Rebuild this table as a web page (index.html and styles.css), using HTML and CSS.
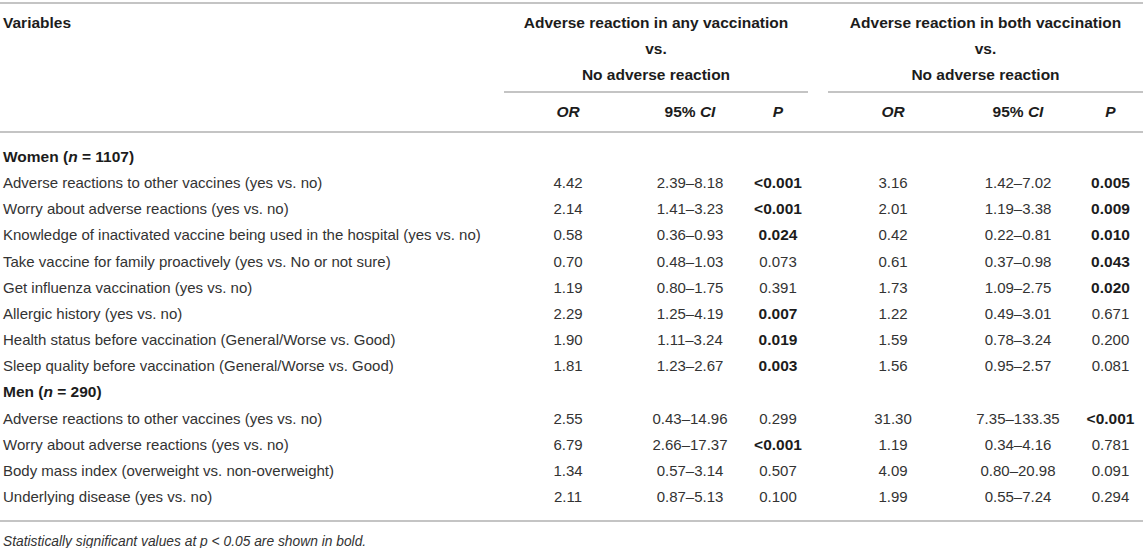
FILE: index.html
```html
<!DOCTYPE html>
<html lang="en">

<head>
    <meta charset="UTF-8">
    <meta name="viewport" content="width=device-width, initial-scale=1.0">
    <title>Adverse reactions - multivariable analysis</title>
    <link rel="stylesheet" href="styles.css">
</head>

<body>
    <table class="results">
        <colgroup>
            <col class="c-var">
            <col class="c-or1">
            <col class="c-ci1">
            <col class="c-p1">
            <col class="c-gap">
            <col class="c-or2">
            <col class="c-ci2">
            <col class="c-p2">
        </colgroup>
        <thead>
            <tr class="group-row">
                <th class="var-head" rowspan="2">Variables</th>
                <th class="group" colspan="3">Adverse reaction in any vaccination<br>vs.<br>No adverse reaction</th>
                <th class="gap"></th>
                <th class="group" colspan="3">Adverse reaction in both vaccination<br>vs.<br>No adverse reaction</th>
            </tr>
            <tr class="stat-row">
                <th><i>OR</i></th>
                <th>95% <i>CI</i></th>
                <th><i>P</i></th>
                <th class="gap"></th>
                <th><i>OR</i></th>
                <th>95% <i>CI</i></th>
                <th><i>P</i></th>
            </tr>
        </thead>
        <tbody>
            <tr class="section">
                <td colspan="8"><b>Women (<i>n</i> = 1107)</b></td>
            </tr>
            <tr>
                <td>Adverse reactions to other vaccines (yes vs. no)</td>
                <td>4.42</td><td>2.39–8.18</td><td><b>&lt;0.001</b></td><td></td>
                <td>3.16</td><td>1.42–7.02</td><td><b>0.005</b></td>
            </tr>
            <tr>
                <td>Worry about adverse reactions (yes vs. no)</td>
                <td>2.14</td><td>1.41–3.23</td><td><b>&lt;0.001</b></td><td></td>
                <td>2.01</td><td>1.19–3.38</td><td><b>0.009</b></td>
            </tr>
            <tr>
                <td>Knowledge of inactivated vaccine being used in the hospital (yes vs. no)</td>
                <td>0.58</td><td>0.36–0.93</td><td><b>0.024</b></td><td></td>
                <td>0.42</td><td>0.22–0.81</td><td><b>0.010</b></td>
            </tr>
            <tr>
                <td>Take vaccine for family proactively (yes vs. No or not sure)</td>
                <td>0.70</td><td>0.48–1.03</td><td>0.073</td><td></td>
                <td>0.61</td><td>0.37–0.98</td><td><b>0.043</b></td>
            </tr>
            <tr>
                <td>Get influenza vaccination (yes vs. no)</td>
                <td>1.19</td><td>0.80–1.75</td><td>0.391</td><td></td>
                <td>1.73</td><td>1.09–2.75</td><td><b>0.020</b></td>
            </tr>
            <tr>
                <td>Allergic history (yes vs. no)</td>
                <td>2.29</td><td>1.25–4.19</td><td><b>0.007</b></td><td></td>
                <td>1.22</td><td>0.49–3.01</td><td>0.671</td>
            </tr>
            <tr>
                <td>Health status before vaccination (General/Worse vs. Good)</td>
                <td>1.90</td><td>1.11–3.24</td><td><b>0.019</b></td><td></td>
                <td>1.59</td><td>0.78–3.24</td><td>0.200</td>
            </tr>
            <tr>
                <td>Sleep quality before vaccination (General/Worse vs. Good)</td>
                <td>1.81</td><td>1.23–2.67</td><td><b>0.003</b></td><td></td>
                <td>1.56</td><td>0.95–2.57</td><td>0.081</td>
            </tr>
            <tr class="section">
                <td colspan="8"><b>Men (<i>n</i> = 290)</b></td>
            </tr>
            <tr>
                <td>Adverse reactions to other vaccines (yes vs. no)</td>
                <td>2.55</td><td>0.43–14.96</td><td>0.299</td><td></td>
                <td>31.30</td><td>7.35–133.35</td><td><b>&lt;0.001</b></td>
            </tr>
            <tr>
                <td>Worry about adverse reactions (yes vs. no)</td>
                <td>6.79</td><td>2.66–17.37</td><td><b>&lt;0.001</b></td><td></td>
                <td>1.19</td><td>0.34–4.16</td><td>0.781</td>
            </tr>
            <tr>
                <td>Body mass index (overweight vs. non-overweight)</td>
                <td>1.34</td><td>0.57–3.14</td><td>0.507</td><td></td>
                <td>4.09</td><td>0.80–20.98</td><td>0.091</td>
            </tr>
            <tr>
                <td>Underlying disease (yes vs. no)</td>
                <td>2.11</td><td>0.87–5.13</td><td>0.100</td><td></td>
                <td>1.99</td><td>0.55–7.24</td><td>0.294</td>
            </tr>
        </tbody>
    </table>
    <p class="note">Statistically significant values at <span>p</span> &lt; 0.05 are shown in bold.</p>
</body>

</html>
```

FILE: styles.css
```css
body {
    margin: 0;
    padding-top: 2px;
    background-color: #ffffff;
    font-family: "Liberation Sans", Arial, Helvetica, sans-serif;
    color: #333333;
}

.results {
    width: 1143px;
    table-layout: fixed;
    border-collapse: separate;
    border-spacing: 0;
    border-top: 2px solid #c4c4c4;
    border-bottom: 2px solid #c4c4c4;
    font-size: 15px;
}

.c-var { width: 504px; }
.c-or1 { width: 128px; }
.c-ci1 { width: 116px; }
.c-p1 { width: 60px; }
.c-gap { width: 20px; }
.c-or2 { width: 130px; }
.c-ci2 { width: 120px; }
.c-p2 { width: 65px; }

th {
    font-weight: bold;
    font-size: 15.5px;
    color: #1c1c1c;
    text-align: center;
    padding: 0;
}

.var-head {
    text-align: left;
    vertical-align: top;
    padding: 6px 0 0 3px;
    line-height: 26px;
    border-bottom: 2px solid #c4c4c4;
}

.group-row .group {
    line-height: 26px;
    padding: 6px 0 3px 0;
    border-bottom: 2px solid #c4c4c4;
}

.stat-row th {
    line-height: 20px;
    padding: 9px 0 9px 0;
    border-bottom: 2px solid #c4c4c4;
}

td {
    padding: 0;
    line-height: 26.15px;
    text-align: center;
    white-space: nowrap;
}

td:first-child {
    text-align: left;
    padding-left: 3px;
}

td b {
    font-size: 15.5px;
    color: #1c1c1c;
}

tbody tr:first-child td {
    padding-top: 11px;
}

tbody tr:last-child td {
    padding-bottom: 10px;
}

.note {
    margin: 11px 0 0 3px;
    font-size: 13.8px;
    font-style: italic;
    line-height: 18px;
    color: #333333;
}
```
